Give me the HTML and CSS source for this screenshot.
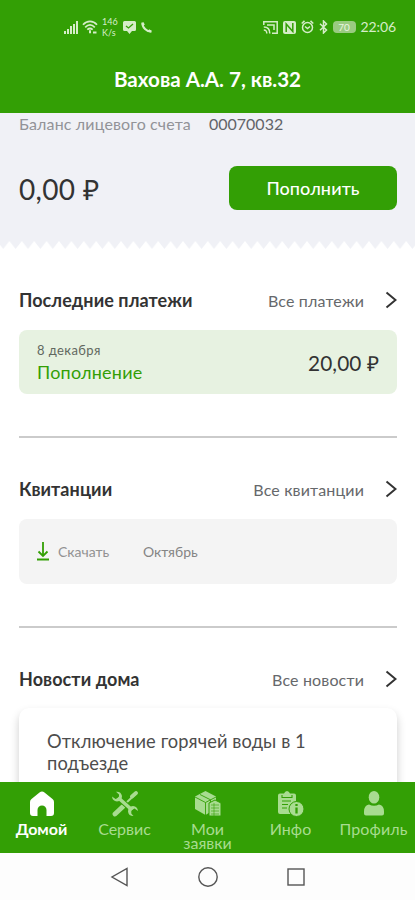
FILE: index.html
```html
<!DOCTYPE html>
<html lang="ru">
<head>
<meta charset="utf-8">
<meta name="viewport" content="width=device-width, initial-scale=1">
<title>Домой</title>
<link rel="stylesheet" href="styles.css">
</head>
<body>
<div class="app">
  <header class="header">
    <div class="status">
      <div class="status-left">
        <svg width="15" height="13" viewBox="0 0 15 13" fill="currentColor"><path d="M0 10h2v3H0zM3 8h2v5H3zM6 5h2v8H6zM9 3h2v10H9zM12 0h2v13h-2z"/></svg>
        <svg class="wifi" width="16" height="14" viewBox="0 0 16 14" fill="none" stroke="currentColor" stroke-width="1.700"><path d="M1 4.800C5 .200 11 .200 15 4.800M3.200 7.300c3-3 6.600-3 9.600 0M5.300 9.700c1.800-1.600 3.600-1.600 5.400 0"/><path d="M8 10.200v3M11 12.500h3.500" stroke-width="2"/></svg>
        <span class="speed"><span>146</span><span>K/s</span></span>
        <svg class="chat" width="13" height="13" viewBox="0 0 13 13"><path d="M1.500 0h10A1.500 1.500 0 0 1 13 1.500v7a1.500 1.500 0 0 1-1.500 1.500H9l-2.500 3L4 10H1.500A1.500 1.500 0 0 1 0 8.500v-7A1.500 1.500 0 0 1 1.500 0z" fill="currentColor"/><path d="M3 5l2.500 2L10 3" fill="none" stroke="#339f05" stroke-width="1.300"/></svg>
        <svg class="phone" width="11" height="11" viewBox="0 0 11 11" fill="none" stroke="currentColor" stroke-width="2.100"><path d="M1.500.500C1.200 5.500 5.500 9.800 10.500 9.500"/><path d="M1.300 1l1.500 2.300M10 9.700L7.500 8.200" stroke-width="2.500"/></svg>
      </div>
      <div class="status-right">
        <svg width="15" height="13" viewBox="0 0 15 13" fill="none" stroke="currentColor" stroke-width="1.500"><path d="M.800 4V.800h13.400v11.400H9M.800 6c4 0 6 2.500 6 6.500M.800 9c2 0 3 1.200 3 3.500M4 4h7v5"/></svg>
        <svg width="13" height="13" viewBox="0 0 13 13"><rect width="13" height="13" rx="2" fill="currentColor"/><path d="M3.200 11V3l6.600 7.500V2" fill="none" stroke="#339f05" stroke-width="1.500"/></svg>
        <svg width="13" height="14" viewBox="0 0 13 14" fill="none" stroke="currentColor" stroke-width="1.500"><circle cx="6.500" cy="7.500" r="5"/><path d="M.700 3.500L3.500.900M12.300 3.500L9.500.900M4 6.500l2.500 2L9 6.500"/></svg>
        <svg width="9" height="14" viewBox="0 0 9 14" fill="none" stroke="currentColor" stroke-width="1.500"><path d="M1 3.700l6.500 6.300-3 3V1l3 3L1 10.300"/></svg>
        <span class="battery">70</span>
        <span class="clock">22:06</span>
      </div>
    </div>
    <h1 class="title">Вахова А.А. 7, кв.32</h1>
  </header>

  <main class="content">
    <section class="balance">
      <div class="account"><span class="account-label">Баланс лицевого счета</span><span class="account-number">00070032</span></div>
      <div class="balance-row"><span class="amount">0,00 ₽</span><button class="topup">Пополнить</button></div>
    </section>
    <svg class="teeth" width="415" height="9"><defs><pattern id="tooth" x="-3" width="12.400" height="9" patternUnits="userSpaceOnUse"><path d="M0 0h12.400L6.200 8z" fill="#f0f1f6"/></pattern></defs><rect width="415" height="9" fill="url(#tooth)"/></svg>

    <section class="section payments">
      <div class="section-head"><h2>Последние платежи</h2><a>Все платежи</a><svg class="chevron" width="12" height="18" viewBox="0 0 12 18"><path d="M1.500 1.500L10.500 9l-9 7.500"/></svg></div>
      <div class="card payment">
        <div class="payment-info"><span class="date">8 декабря</span><span class="kind">Пополнение</span></div>
        <span class="sum">20,00 ₽</span>
      </div>
    </section>

    <section class="section bills">
      <div class="section-head"><h2>Квитанции</h2><a>Все квитанции</a><svg class="chevron" width="12" height="18" viewBox="0 0 12 18"><path d="M1.500 1.500L10.500 9l-9 7.500"/></svg></div>
      <div class="card bill">
        <svg width="12" height="19" viewBox="0 0 12 19" fill="none" stroke="#339f05" stroke-width="1.800"><path d="M6 0v14M1.500 9.500L6 14l4.500-4.500M0 17.500h12"/></svg>
        <span class="download">Скачать</span><span class="month">Октябрь</span>
      </div>
    </section>

    <section class="section last">
      <div class="section-head"><h2>Новости дома</h2><a>Все новости</a><svg class="chevron" width="12" height="18" viewBox="0 0 12 18"><path d="M1.500 1.500L10.500 9l-9 7.500"/></svg></div>
      <article class="news">Отключение горячей воды в 1<br>подъезде</article>
    </section>
  </main>

  <nav class="tabs">
    <a class="tab active"><svg width="26" height="26" viewBox="0 0 26 26" fill="currentColor"><path d="M10.500 1.500q2.500-2 5 0l8 6.500q1.500 1.200 1.500 3V22q0 3-3 3h-4.500v-6a4.500 4.500 0 0 0-9 0v6H4q-3 0-3-3V11q0-1.800 1.500-3z"/></svg><span>Домой</span></a>
    <a class="tab"><svg width="28" height="26" viewBox="0 0 28 26"><path d="M3 23.500L24.500 3" stroke="currentColor" stroke-width="2" fill="none"/><path d="M21 5.500L25 2" stroke="currentColor" stroke-width="3.800" stroke-linecap="round"/><path d="M4 23l8-7.500" stroke="currentColor" stroke-width="4.800" stroke-linecap="round"/><path d="M7 6.500l14 12.500" stroke="#339f05" stroke-width="5.500"/><path d="M7 6.500l14 12.500" stroke="currentColor" stroke-width="3.600"/><path d="M5 .8Q10 .3 11 5q0 5-5 5.500-4.500-.5-5-5L4.500 8 8 6.500V3.500zM22.500 25Q17.500 25 17 20.500q0-5 5-5.500 4.500.5 5 5l-3.500-2.500-3.200 2v3z" fill="currentColor"/></svg><span>Сервис</span></a>
    <a class="tab"><svg width="28" height="26" viewBox="0 0 28 26"><path d="M1 5.500L11.500 0 22 5.500v12L11.500 24 1 18z" fill="currentColor"/><path d="M1 6l10.500 5.500V24M11.500 11.500L22 6M6 3.500l10.500 5.300v4" fill="none" stroke="#339f05" stroke-width=".9"/><path d="M15 12l6-3 6 3v13H15z" fill="currentColor" stroke="#339f05"/><path d="M17 14h8M17 17h8M17 20h8M17 23h8M20 12v13" stroke="#339f05" stroke-width=".6" fill="none"/></svg><span>Мои<br>заявки</span></a>
    <a class="tab"><svg width="28" height="26" viewBox="0 0 28 26"><path d="M3 2.500h4Q8 0 10 0t3 2.500h4q2 0 2 2V21q0 2-2 2H3q-2 0-2-2V4.500q0-2 2-2z" fill="currentColor"/><path d="M5 4v2.500h10V4M5 10h9M5 13.500h6M5 17h5" fill="none" stroke="#339f05" stroke-width="1.100"/><circle cx="19.500" cy="18" r="7.500" fill="currentColor" stroke="#339f05"/><path d="M19.500 13v2M19.500 16.500v6" stroke="#339f05" stroke-width="2.300"/></svg><span>Инфо</span></a>
    <a class="tab"><svg width="22" height="26" viewBox="0 0 22 26" fill="currentColor"><ellipse cx="11" cy="6.300" rx="5.300" ry="6.300"/><path d="M6 13.500q5 2.500 10 0 5 1 5 7v2q0 2-2 2H3q-2 0-2-2v-2q0-6 5-7z"/></svg><span>Профиль</span></a>
  </nav>

  <footer class="system">
    <svg width="22" height="22" viewBox="0 0 22 22"><path d="M18 2.500v17L3 11z"/></svg>
    <svg width="22" height="22" viewBox="0 0 22 22"><circle cx="11" cy="11" r="9.200"/></svg>
    <svg width="22" height="22" viewBox="0 0 22 22"><rect x="3" y="3" width="16" height="16"/></svg>
  </footer>
</div>
</body>
</html>
```
FILE: styles.css
```css
* { box-sizing: border-box; }
body { margin: 0; font-family: Lato, "Liberation Sans", sans-serif; color: #333; background: #fff; }
svg { display: block; flex: none; }
h1, h2 { margin: 0; }
.app { width: 415px; height: 900px; display: flex; flex-direction: column; overflow: hidden; }

.header { height: 113px; flex: none; background: #339f05; color: #fff; }
.status { height: 52px; padding: 2px 19px 0 64px; display: flex; justify-content: space-between; align-items: center; color: #d5edc8; }
.status-left, .status-right { display: flex; align-items: center; }
.wifi { margin-left: 3px; }
.speed { display: flex; flex-direction: column; margin-left: 4px; width: 17px; font-size: 9px; line-height: 11px; }
.chat { margin-left: 4px; }
.phone { margin-left: 5px; }
.status-right { gap: 5px; }
.battery { width: 23px; height: 12px; border-radius: 4px; background: #9acb80; color: #e8f5e0; font-size: 10px; line-height: 12px; text-align: center; }
.clock { font-size: 14px; line-height: 16px; letter-spacing: -0.1px; }
.title { padding-top: 14px; font-size: 20.6px; line-height: 26px; text-align: center; font-weight: 700; }

.content { height: 669px; flex: none; overflow: hidden; }
.balance { height: 128px; padding: 0 19px; background: #f0f1f6; }
.account { display: flex; gap: 18px; font-size: 16px; line-height: 22px; white-space: nowrap; }
.account-label { color: #929398; letter-spacing: 0.14px; }
.account-number { color: #626469; }
.balance-row { display: flex; justify-content: space-between; align-items: center; height: 44px; margin: 31px -1px 0 0; }
.amount { padding-top: 2px; font-size: 28px; letter-spacing: 0.3px; }
.topup { width: 168px; height: 44px; border: 0; border-radius: 8px; padding: 0; background: #339f05; color: #fff; font: 500 18px Lato, sans-serif; letter-spacing: 0.1px; }

.section { display: flow-root; margin: 0 18px 0 19px; border-bottom: 2px solid #cbcbcb; }
.payments { height: 188px; }
.bills { height: 190px; }
.section-head { display: flex; align-items: center; height: 24px; white-space: nowrap; margin-top: 39px; }
.payments .section-head { margin-top: 38px; }
.section-head h2 { flex: 1; font-size: 18px; line-height: 24px; font-weight: 700; color: #333; letter-spacing: 0.07px; }
.section-head a { padding-top: 2px; font-size: 16px; line-height: 22px; color: #66686b; letter-spacing: 0.15px; }
.chevron { margin-left: 21px; fill: none; stroke: #333; stroke-width: 2; }
.card { height: 65px; margin-top: 18px; border-radius: 8px; display: flex; align-items: center; padding: 0 18px; }
.payment { height: 64px; background: #e7f2e1; justify-content: space-between; }
.payment-info { display: flex; flex-direction: column; padding-top: 1px; }
.date { font-size: 13px; line-height: 18px; color: #626860; letter-spacing: 0.4px; }
.kind { font-size: 18px; line-height: 26px; color: #339f05; letter-spacing: 0.2px; }
.sum { padding-top: 2px; font-size: 20.8px; letter-spacing: 0.1px; }
.bill { background: #f4f4f4; font-size: 14px; color: #929292; }
.download { margin-left: 9px; width: 85px; }
.month { color: #858585; }
.last { height: auto; border: 0; }
.news { height: 110px; margin-top: 17px; padding: 22px 28px; border-radius: 10px; background: #fff; box-shadow: 0 5px 10px rgba(0,0,0,.2); font-size: 18.300px; line-height: 22px; color: #4d4d4d; letter-spacing: 0.1px; white-space: nowrap; }

.tabs { height: 71px; flex: none; display: grid; grid-template-columns: repeat(5, 83px); background: #339f05; color: #a8dc90; }
.tab { display: flex; flex-direction: column; align-items: center; padding-top: 9px; font-size: 16px; line-height: 14px; text-align: center; white-space: nowrap; }
.tab span { margin-top: 5px; }
.tab:last-child { letter-spacing: 0.15px; }
.active { color: #fff; font-weight: 700; }
.system { height: 47px; flex: none; display: flex; justify-content: center; gap: 66px; padding-top: 13px; background: #fdfdfd; }
.system svg { fill: none; stroke: #555; stroke-width: 1.400; }
```
